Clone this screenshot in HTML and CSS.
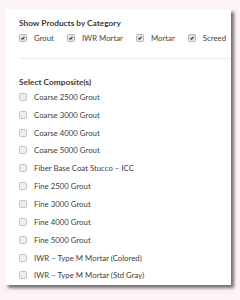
FILE: index.html
```html
<!DOCTYPE html>
<html>
<head>
<meta charset="utf-8">
<link rel="stylesheet" href="styles.css">
</head>
<body>
<div class="card">
  <h3 class="title">Show Products by Category</h3>
  <div class="cats">
    <label class="opt"><span class="cb on"><svg viewBox="0 0 8 8"><path d="M2 4.2 L3.4 5.6 L6 2.4" /></svg></span>Grout</label>
    <label class="opt"><span class="cb on"><svg viewBox="0 0 8 8"><path d="M2 4.2 L3.4 5.6 L6 2.4" /></svg></span>IWR Mortar</label>
    <label class="opt"><span class="cb on"><svg viewBox="0 0 8 8"><path d="M2 4.2 L3.4 5.6 L6 2.4" /></svg></span>Mortar</label>
    <label class="opt"><span class="cb on"><svg viewBox="0 0 8 8"><path d="M2 4.2 L3.4 5.6 L6 2.4" /></svg></span>Screed</label>
  </div>
  <hr class="divider">
  <h3 class="title sub">Select Composite(s)</h3>
  <ul class="list">
    <li class="item"><span class="cb"></span>Coarse 2500 Grout</li>
    <li class="item"><span class="cb"></span>Coarse 3000 Grout</li>
    <li class="item"><span class="cb"></span>Coarse 4000 Grout</li>
    <li class="item"><span class="cb"></span>Coarse 5000 Grout</li>
    <li class="item"><span class="cb"></span>Fiber Base Coat Stucco – ICC</li>
    <li class="item"><span class="cb"></span>Fine 2500 Grout</li>
    <li class="item"><span class="cb"></span>Fine 3000 Grout</li>
    <li class="item"><span class="cb"></span>Fine 4000 Grout</li>
    <li class="item"><span class="cb"></span>Fine 5000 Grout</li>
    <li class="item"><span class="cb"></span>IWR – Type M Mortar (Colored)</li>
    <li class="item"><span class="cb"></span>IWR – Type M Mortar (Std Gray)</li>
  </ul>
</div>
</body>
</html>
```
FILE: styles.css
```css
html, body {
  margin: 0;
  padding: 0;
}
body {
  background: #fcf3f5;
  font-family: Lato, "Open Sans", sans-serif;
  color: #444;
  padding: 9px 0 0 5px;
  height: 300px;
  box-sizing: border-box;
}
.card {
  width: 226px;
  height: 276px;
  box-sizing: border-box;
  background: #fff;
  box-shadow: 3px 3px 3px rgba(0, 0, 0, 0.55);
  padding: 8px 0 0 0;
  overflow: hidden;
}
.title {
  margin: 0 0 0 14px;
  font-size: 8.3px;
  font-weight: bold;
  color: #3a3a3a;
  line-height: 12px;
}
.cats {
  display: flex;
  margin: 3px 0 0 14px;
  font-size: 7.8px;
  line-height: 12px;
}
.opt {
  display: flex;
  align-items: center;
  margin-right: 13px;
  white-space: nowrap;
}
.cb {
  display: inline-block;
  width: 6px;
  height: 6px;
  border: 1px solid #c4c4c4;
  border-radius: 1.5px;
  background: #ededed;
  margin-right: 7px;
  flex: none;
  box-sizing: content-box;
}
.cb.on {
  background: #e2e2e2;
  border-color: #b8b8b8;
}
.cb svg {
  display: block;
  width: 6px;
  height: 6px;
}
.cb svg path {
  fill: none;
  stroke: #333;
  stroke-width: 1.4;
}
.divider {
  border: 0;
  border-top: 1px solid #ececec;
  margin: 14px 0 0 14px;
}
.sub {
  margin-top: 17px;
}
.list {
  list-style: none;
  margin: 0 0 0 14px;
  padding: 0;
  font-size: 7.8px;
  color: #404040;
}
.item {
  display: flex;
  align-items: center;
  height: 17.85px;
  white-space: nowrap;
}
```
